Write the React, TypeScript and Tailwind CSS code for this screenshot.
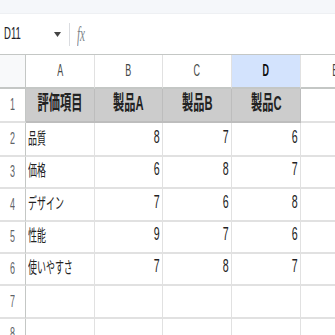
import React from 'react';

const font = { fontFamily: '"Liberation Sans", "Noto Sans CJK JP", sans-serif' };

const cols = ['A', 'B', 'C', 'D', 'E'];
const header = ['評価項目', '製品A', '製品B', '製品C'];
const rows: [string, number, number, number][] = [
  ['品質', 8, 7, 6],
  ['価格', 6, 8, 7],
  ['デザイン', 7, 6, 8],
  ['性能', 9, 7, 6],
  ['使いやすさ', 7, 8, 7],
];
const heights = ['h-[34px]', 'h-[32px]', 'h-[33px]', 'h-[32px]', 'h-[32px]', 'h-[33px]', 'h-[32px]'];

function Squeeze({ children, origin }: { children: React.ReactNode; origin: string }) {
  return <span className={`inline-block whitespace-nowrap scale-x-[0.56] ${origin}`}>{children}</span>;
}

function RowHead({ n, h }: { n: number; h: string }) {
  return (
    <div className={`${h} flex items-center justify-center border-r border-b-2 border-r-[#c4c7c5] border-b-[#e1e1e1] text-[16px] text-[#5f6368]`}>
      <Squeeze origin="origin-center">{n}</Squeeze>
    </div>
  );
}

function Cell({ children, right, h }: { children?: React.ReactNode; right?: boolean; h: string }) {
  return (
    <div
      className={`${h} flex items-end overflow-hidden border-r border-b-2 border-r-[#e1e1e1] border-b-[#e1e1e1] pb-[4px] text-[#222] ${
        right ? 'justify-end pr-[2px] text-[19px]' : 'justify-start pl-[2px] text-[16px]'
      }`}
    >
      {children !== undefined && (
        <Squeeze origin={right ? 'origin-right' : 'origin-left'}>{children}</Squeeze>
      )}
    </div>
  );
}

export default function App() {
  return (
    <div className="w-[335px] h-[335px] overflow-hidden bg-white" style={font}>
      {/* toolbar remnant */}
      <div className="h-[14px] bg-[#f5f7fa] border-b border-[#eef0f3]" />

      {/* name box + formula bar */}
      <div className="h-[41px] flex items-center border-b border-[#c4c7c5]">
        <div className="w-[50px] pl-[4px] text-[17px] text-[#202124]">
          <Squeeze origin="origin-left">D11</Squeeze>
        </div>
        <svg width="7" height="5" viewBox="0 0 7 5" className="ml-[4px]">
          <path d="M0 0h7L3.5 5z" fill="#444" />
        </svg>
        <div className="ml-[8px] h-[23px] w-px bg-[#dadce0]" />
        <div className="ml-[7px] text-[20px] italic text-[#80868b]" style={{ fontFamily: '"Liberation Serif", serif' }}>
          <Squeeze origin="origin-left">fx</Squeeze>
        </div>
      </div>

      {/* grid */}
      <div className="grid grid-cols-[26px_69px_68px_69px_69px_69px]">
        {/* column header row */}
        <div className="h-[34px] bg-[#f8f9fa] border-r border-b-2 border-r-[#c4c7c5] border-b-[#c4c7c5]" />
        {cols.map((c) => (
          <div
            key={c}
            className={`h-[34px] flex items-center justify-center border-r border-b-2 border-r-[#e1e1e1] border-b-[#c4c7c5] text-[16px] ${
              c === 'D' ? 'bg-[#d3e3fd] text-[#0b0b0b] font-bold' : 'bg-white text-[#444746]'
            }`}
          >
            <Squeeze origin="origin-center">{c}</Squeeze>
          </div>
        ))}

        {/* row 1 */}
        <RowHead n={1} h="h-[34px]" />
        {header.map((t) => (
          <div
            key={t}
            className="h-[34px] flex items-end justify-center pb-[3px] bg-[#cccccc] border-r border-b-2 border-r-[#bdbdbd] border-b-[#bdbdbd] text-[20px] font-bold text-[#222]"
          >
            <Squeeze origin="origin-center">{t}</Squeeze>
          </div>
        ))}
        <div className="h-[34px] border-b-2 border-[#e1e1e1]" />

        {/* data rows */}
        {rows.map((r, i) => (
          <React.Fragment key={r[0]}>
            <RowHead n={i + 2} h={heights[i]} />
            <Cell h={heights[i]}>{r[0]}</Cell>
            <Cell h={heights[i]} right>{r[1]}</Cell>
            <Cell h={heights[i]} right>{r[2]}</Cell>
            <Cell h={heights[i]} right>{r[3]}</Cell>
            <Cell h={heights[i]} />
          </React.Fragment>
        ))}

        {/* empty rows */}
        {[7, 8].map((n) => (
          <React.Fragment key={n}>
            <RowHead n={n} h={heights[n - 2]} />
            <Cell h={heights[n - 2]} />
            <Cell h={heights[n - 2]} />
            <Cell h={heights[n - 2]} />
            <Cell h={heights[n - 2]} />
            <Cell h={heights[n - 2]} />
          </React.Fragment>
        ))}
      </div>
    </div>
  );
}
